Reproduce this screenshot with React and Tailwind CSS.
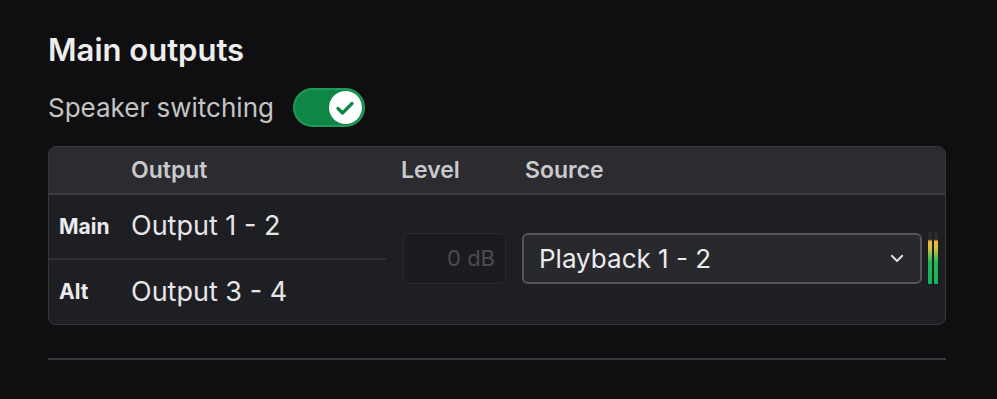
export default function App() {
  return (
    <div className="min-h-screen w-full bg-[#0f0f11] font-['Inter',sans-serif]">
      <div className="pl-12 pr-[51px] pt-[32px]">
        <h2 className="text-[31px] font-semibold leading-[36px] text-[#ededed]">Main outputs</h2>

        <div className="mt-[20px] flex items-center gap-[19px]">
          <span className="text-[26px] leading-[30px] text-[#c4c4c6]">Speaker switching</span>
          <button className="flex h-[39px] w-[72px] items-center justify-end rounded-full border-2 border-[#1f9a58] bg-[#0f8546] pr-[1px]">
            <span className="flex h-[33px] w-[33px] items-center justify-center rounded-full bg-white">
              <svg viewBox="0 0 24 24" className="h-[24px] w-[24px]" fill="none" stroke="#0f8546" strokeWidth={3.2} strokeLinecap="round" strokeLinejoin="round">
                <path d="M5 12.5l4.5 4.5L19 7.5" />
              </svg>
            </span>
          </button>
        </div>

        <div className="mt-[19px] overflow-hidden rounded-[8px] border border-[#38383c] bg-[#1e1f22]">
          {/* header */}
          <div className="flex h-[48px] items-center border-b-2 border-[#3b3b40] bg-[#2b2b30] text-[23px] font-semibold text-[#c9c9cc]">
            <span className="ml-[82px] w-[270px]">Output</span>
            <span className="w-[124px]">Level</span>
            <span>Source</span>
          </div>

          {/* body */}
          <div className="flex h-[129px]">
            <div className="flex w-[337px] flex-col">
              <div className="flex h-[65px] items-center border-b-2 border-[#2f3034]">
                <span className="w-[82px] pl-[10px] text-[21px] font-bold text-[#ececee]">Main</span>
                <span className="text-[27px] text-[#e6e6e8]">Output 1 - 2</span>
              </div>
              <div className="flex flex-1 items-center">
                <span className="w-[82px] pl-[10px] text-[21px] font-bold text-[#ececee]">Alt</span>
                <span className="text-[27px] text-[#e6e6e8]">Output 3 - 4</span>
              </div>
            </div>

            <div className="flex flex-1 items-center pl-[17px] pb-[3px]">
              <div className="flex h-[51px] w-[103px] items-center justify-end rounded-[6px] border border-[#2a2b2e] bg-[#1b1c1f] pr-[10px] text-[22px] text-[#4b4c50]">
                0 dB
              </div>
              <div className="ml-[16px] flex h-[51px] flex-1 items-center justify-between rounded-[6px] border-2 border-[#55565a] bg-[#28292c] pl-[15px] pr-[14px]">
                <span className="text-[26px] text-[#ececee]">Playback 1 - 2</span>
                <svg viewBox="0 0 24 24" className="h-[18px] w-[18px]" fill="none" stroke="#e0e0e2" strokeWidth={2.6} strokeLinecap="round" strokeLinejoin="round">
                  <path d="M5 9l7 7 7-7" />
                </svg>
              </div>
              <div className="ml-[6px] mr-[7px] flex h-[52px] gap-[2px]">
                <div className="w-[4px] rounded-[1px] bg-[linear-gradient(to_bottom,#2a2a2c_0%,#2a2a2c_14%,#f1b534_18%,#d9c23a_30%,#1fb85c_58%,#12b55a_100%)]" />
                <div className="w-[4px] rounded-[1px] bg-[linear-gradient(to_bottom,#2a2a2c_0%,#2a2a2c_14%,#f1b534_18%,#d9c23a_30%,#1fb85c_58%,#12b55a_100%)]" />
              </div>
            </div>
          </div>
        </div>

        <div className="mt-[33px] h-[2px] bg-[#38383c]" />
      </div>
    </div>
  );
}
